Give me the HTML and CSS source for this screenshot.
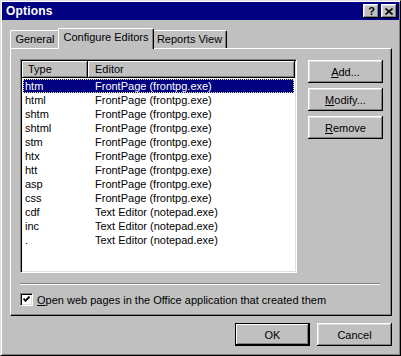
FILE: index.html
```html
<!DOCTYPE html>
<html lang="en">
  <head>
    <meta charset="UTF-8" />
    <title>Options</title>
    <link rel="stylesheet" href="styles.css">
  </head>
  <body>
    <div class="window">
      <div class="titlebar">
        <span class="title">Options</span>
        <div class="title-btns">
          <span class="tbtn help">?</span>
          <span class="tbtn close">
            <svg width="8" height="7" viewBox="0 0 8 7"><path d="M0.5 0.5 L7.5 6.5 M7.5 0.5 L0.5 6.5" stroke="#000" stroke-width="1.6" fill="none"/></svg>
          </span>
        </div>
      </div>

      <div class="content">
        <div class="tabs">
          <div class="tab tab-general">General</div>
          <div class="tab tab-editors active">Configure Editors</div>
          <div class="tab tab-reports">Reports View</div>
        </div>

        <div class="panel">
          <div class="panel-top">
            <div class="listview">
              <div class="lv-head">
                <div class="lv-hcell col-type">Type</div>
                <div class="lv-hcell col-editor">Editor</div>
              </div>
              <div class="lv-body">
                <div class="lv-row selected"><span>htm</span><span>FrontPage (frontpg.exe)</span></div>
                <div class="lv-row"><span>html</span><span>FrontPage (frontpg.exe)</span></div>
                <div class="lv-row"><span>shtm</span><span>FrontPage (frontpg.exe)</span></div>
                <div class="lv-row"><span>shtml</span><span>FrontPage (frontpg.exe)</span></div>
                <div class="lv-row"><span>stm</span><span>FrontPage (frontpg.exe)</span></div>
                <div class="lv-row"><span>htx</span><span>FrontPage (frontpg.exe)</span></div>
                <div class="lv-row"><span>htt</span><span>FrontPage (frontpg.exe)</span></div>
                <div class="lv-row"><span>asp</span><span>FrontPage (frontpg.exe)</span></div>
                <div class="lv-row"><span>css</span><span>FrontPage (frontpg.exe)</span></div>
                <div class="lv-row"><span>cdf</span><span>Text Editor (notepad.exe)</span></div>
                <div class="lv-row"><span>inc</span><span>Text Editor (notepad.exe)</span></div>
                <div class="lv-row"><span>.</span><span>Text Editor (notepad.exe)</span></div>
              </div>
            </div>

            <div class="side-btns">
              <button class="btn"><u>A</u>dd...</button>
              <button class="btn"><u>M</u>odify...</button>
              <button class="btn"><u>R</u>emove</button>
            </div>
          </div>

          <div class="separator"></div>

          <label class="check-row">
            <span class="checkbox">
              <svg width="7" height="7" viewBox="0 0 7 7"><path d="M0.5 2.5 L2.5 4.8 L6.5 0.6" stroke="#000" stroke-width="1.9" fill="none"/></svg>
            </span>
            <span><u>O</u>pen web pages in the Office application that created them</span>
          </label>
        </div>

        <div class="dialog-btns">
          <button class="btn default">OK</button>
          <button class="btn">Cancel</button>
        </div>
      </div>
    </div>
  </body>
</html>
```

FILE: styles.css
```css
* {
  margin: 0;
  padding: 0;
  box-sizing: border-box;
}
body {
  background: #c0c0c0;
  font-family: "Liberation Sans", Arial, sans-serif;
  font-size: 11px;
  color: #000;
}
.window {
  width: 401px;
  height: 356px;
  background: #c0c0c0;
  border: 1px solid;
  border-color: #dfdfdf #000 #000 #dfdfdf;
  box-shadow: inset 1px 1px #fff, inset -1px -1px #808080;
  padding: 1px;
  display: flex;
  flex-direction: column;
}
.titlebar {
  height: 18px;
  background: #000080;
  color: #fff;
  display: flex;
  align-items: center;
  justify-content: space-between;
  padding: 0 2px 0 4px;
}
.title {
  font-weight: bold;
  font-size: 12px;
  letter-spacing: 0.2px;
}
.title-btns {
  display: flex;
  gap: 2px;
}
.tbtn {
  width: 16px;
  height: 14px;
  background: #c0c0c0;
  color: #000;
  box-shadow: inset -1px -1px #000, inset 1px 1px #fff, inset -2px -2px #808080, inset 2px 2px #dfdfdf;
  display: flex;
  align-items: center;
  justify-content: center;
}
.help {
  font-weight: bold;
  font-size: 11px;
  line-height: 14px;
  padding-left: 1px;
}
.close svg {
  display: block;
}

.content {
  padding: 8px 7px 0 8px;
}
.tabs {
  display: flex;
  align-items: flex-end;
  height: 20px;
}
.tab {
  height: 18px;
  background: #c0c0c0;
  border-top: 1px solid #fff;
  border-left: 1px solid #fff;
  border-right: 1px solid #000;
  border-radius: 2px 2px 0 0;
  box-shadow: inset -1px 0 #808080;
  text-align: center;
  line-height: 17px;
}
.tab-general {
  width: 50px;
}
.tab-editors {
  width: 96px;
}
.tab-reports {
  width: 75px;
}
.tab.active {
  height: 21px;
  margin: 0 -2px -1px -2px;
  position: relative;
  z-index: 1;
  line-height: 17px;
}

.panel {
  height: 268px;
  border: 1px solid;
  border-color: #fff #000 #000 #fff;
  box-shadow: inset -1px -1px #808080;
  padding: 10px 0 0 9px;
}
.panel-top {
  display: flex;
  gap: 11px;
  align-items: flex-start;
}
.listview {
  width: 277px;
  height: 214px;
  background: #fff;
  border: 1px solid;
  border-color: #808080 #fff #fff #808080;
  box-shadow: inset 1px 1px #000, inset -1px -1px #dfdfdf;
  padding: 1px;
}
.lv-head {
  display: flex;
  height: 17px;
}
.lv-hcell {
  background: #c0c0c0;
  box-shadow: inset -1px -1px #000, inset 1px 1px #fff, inset -2px -2px #808080;
  line-height: 16px;
  padding-left: 6px;
}
.col-type {
  width: 66px;
}
.col-editor {
  flex: 1;
  padding-left: 7px;
}
.lv-body {
  padding-top: 1px;
}
.lv-row {
  display: grid;
  grid-template-columns: 70px 1fr;
  height: 14px;
  line-height: 14px;
  margin-left: 1px;
  width: 271px;
  padding-left: 2px;
  white-space: nowrap;
}
.lv-row.selected {
  background: #000080;
  color: #fff;
  border: 1px dotted #e8e8a0;
  line-height: 12px;
  padding-left: 1px;
}

.side-btns {
  display: flex;
  flex-direction: column;
  gap: 5px;
  margin-top: 1px;
}
.btn {
  width: 75px;
  height: 23px;
  background: #c0c0c0;
  border: none;
  font-family: "Liberation Sans", Arial, sans-serif;
  font-size: 11px;
  color: #000;
  box-shadow: inset -1px -1px #000, inset 1px 1px #fff, inset -2px -2px #808080, inset 2px 2px #dfdfdf;
}
.btn.default {
  border: 1px solid #000;
  box-shadow: inset -1px -1px #000, inset 1px 1px #fff, inset -2px -2px #808080;
}

.separator {
  width: 360px;
  height: 2px;
  margin-top: 10px;
  border-top: 1px solid #808080;
  border-bottom: 1px solid #fff;
}
.check-row {
  display: flex;
  align-items: center;
  gap: 4px;
  margin-top: 8px;
  height: 13px;
}
.checkbox {
  width: 13px;
  height: 13px;
  background: #fff;
  border: 1px solid;
  border-color: #808080 #fff #fff #808080;
  box-shadow: inset 1px 1px #000, inset -1px -1px #dfdfdf;
  display: flex;
  align-items: center;
  justify-content: center;
}
.checkbox svg {
  display: block;
}

.dialog-btns {
  display: flex;
  justify-content: flex-end;
  gap: 7px;
  margin-top: 7px;
}
```
